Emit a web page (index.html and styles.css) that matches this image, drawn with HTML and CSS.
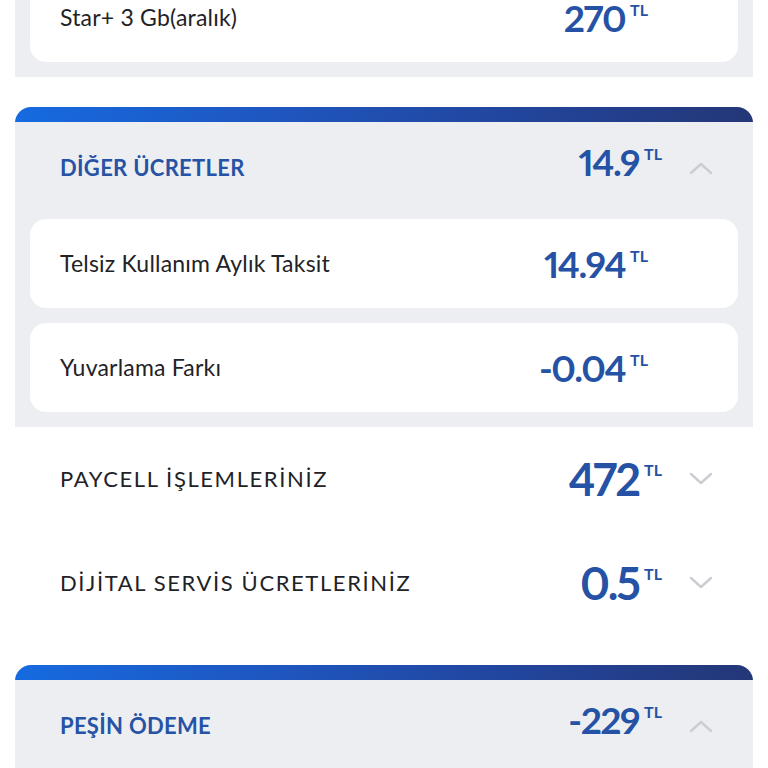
FILE: index.html
```html
<!DOCTYPE html>
<html lang="tr">
<head>
<meta charset="utf-8">
<title>Fatura Detayı</title>
<link rel="stylesheet" href="styles.css">
</head>
<body>
<main class="bill">
  <section class="panel">
    <div class="items">
      <div class="item">
        <span class="item-label">Star+ 3 Gb(aralık)</span>
        <span class="amount">270<span class="cur">TL</span></span>
      </div>
    </div>
  </section>

  <section class="panel panel--open">
    <div class="panel-bar"></div>
    <header class="panel-head">
      <h2 class="panel-title">DİĞER ÜCRETLER</h2>
      <span class="amount amount--head">14.9<span class="cur">TL</span></span>
      <svg class="chev" viewBox="0 0 24 14" aria-hidden="true"><path d="M2 12 L12 3 L22 12"/></svg>
    </header>
    <div class="items">
      <div class="item">
        <span class="item-label">Telsiz Kullanım Aylık Taksit</span>
        <span class="amount">14.94<span class="cur">TL</span></span>
      </div>
      <div class="item">
        <span class="item-label">Yuvarlama Farkı</span>
        <span class="amount">-0.04<span class="cur">TL</span></span>
      </div>
    </div>
  </section>

  <div class="row">
    <h2 class="row-title">PAYCELL İŞLEMLERİNİZ</h2>
    <span class="amount amount--row">472<span class="cur">TL</span></span>
    <svg class="chev" viewBox="0 0 24 14" aria-hidden="true"><path d="M2 2 L12 11 L22 2"/></svg>
  </div>

  <div class="row">
    <h2 class="row-title">DİJİTAL SERVİS ÜCRETLERİNİZ</h2>
    <span class="amount amount--row">0.5<span class="cur">TL</span></span>
    <svg class="chev" viewBox="0 0 24 14" aria-hidden="true"><path d="M2 2 L12 11 L22 2"/></svg>
  </div>

  <section class="panel panel--open panel--last">
    <div class="panel-bar"></div>
    <header class="panel-head">
      <h2 class="panel-title">PEŞİN ÖDEME</h2>
      <span class="amount amount--head">-229<span class="cur">TL</span></span>
      <svg class="chev" viewBox="0 0 24 14" aria-hidden="true"><path d="M2 12 L12 3 L22 12"/></svg>
    </header>
    <div class="items items--empty"></div>
  </section>
</main>
</body>
</html>
```

FILE: styles.css
```css
* {
  box-sizing: border-box;
}

html,
body {
  margin: 0;
  padding: 0;
  background: #ffffff;
}

body {
  font-family: Lato, "Noto Sans", sans-serif;
  color: #1f2226;
  overflow: hidden;
  height: 768px;
}

/* list is scrolled: the first panel starts above the fold */
.bill {
  margin-top: -42px;
  display: flex;
  flex-direction: column;
}

.panel {
  margin: 0 15px;
  background: #eceef2;
}

.panel--open {
  margin-top: 30px;
  border-radius: 16px 16px 0 0;
  overflow: hidden;
}

.panel-bar {
  height: 15px;
  background: linear-gradient(90deg, #166ae0 0%, #1f56bf 35%, #22449a 70%, #243777 100%);
}

.panel-head {
  height: 97px;
  padding: 0 40px 5px 45px;
  display: flex;
  align-items: center;
}

.panel-title {
  flex: 1;
  margin: 0;
  font-size: 22px;
  line-height: 1;
  font-weight: 700;
  color: #2653a5;
  letter-spacing: 0.3px;
}

.items {
  display: flex;
  flex-direction: column;
  gap: 15px;
  padding: 15px 15px 15px;
}

.panel--open .items {
  padding-top: 0;
}

.items--empty {
  height: 120px;
}

.item {
  height: 89px;
  background: #ffffff;
  border-radius: 16px;
  padding: 0 90px 0 30px;
  display: flex;
  align-items: center;
}

.item-label {
  flex: 1;
  font-size: 23px;
  line-height: 1;
  letter-spacing: 0.2px;
  color: #1f2226;
}

.amount {
  display: inline-flex;
  align-items: flex-start;
  font-size: 37px;
  line-height: 1;
  font-weight: 700;
  color: #2552a4;
  letter-spacing: -1.5px;
  font-variant-numeric: proportional-nums;
}

.amount--head {
  margin-bottom: 14px;
}

.amount--row {
  font-size: 45px;
  letter-spacing: -2px;
}

.cur {
  font-size: 16px;
  letter-spacing: 0;
  margin-left: 5px;
  margin-top: 3px;
}

.amount--row .cur {
  margin-top: 5px;
}

.chev {
  width: 24px;
  height: 14px;
  margin-left: 27px;
  fill: none;
  stroke: #cacdd2;
  stroke-width: 2.4;
  stroke-linecap: round;
  stroke-linejoin: round;
}

.row {
  height: 104px;
  margin: 0 15px;
  padding: 0 40px 0 45px;
  display: flex;
  align-items: center;
}

.row-title {
  flex: 1;
  margin: 0;
  font-size: 22px;
  line-height: 1;
  font-weight: 400;
  color: #1f2226;
  letter-spacing: 1.6px;
}
```
